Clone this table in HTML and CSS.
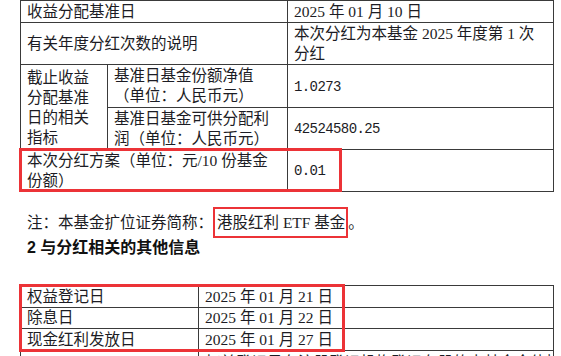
FILE: index.html
```html
<!DOCTYPE html>
<html lang="zh-CN">
<head>
<meta charset="utf-8">
<link rel="stylesheet" href="styles.css">
</head>
<body>
<div class="page">
  <div class="tbl-wrap">
    <table class="tbl t1">
      <colgroup><col class="c-a"><col class="c-b"><col class="c-c"></colgroup>
      <tr class="r1"><td colspan="2">收益分配基准日</td><td>2025 年 01 月 10 日</td></tr>
      <tr class="r2"><td colspan="2">有关年度分红次数的说明</td><td>本次分红为本基金 2025 年度第 1 次<br>分红</td></tr>
      <tr class="r3"><td rowspan="2" class="tall">截止收益<br>分配基准<br>日的相关<br>指标</td><td>基准日基金份额净值<br>（单位：人民币元）</td><td><span class="num">1.0273</span></td></tr>
      <tr class="r4"><td>基准日基金可供分配利<br>润（单位：人民币元）</td><td><span class="num">42524580.25</span></td></tr>
      <tr class="r5"><td colspan="2">本次分红方案（单位：元/10 份基金<br>份额）</td><td><span class="num">0.01</span></td></tr>
    </table>
    <div class="mark mark-1"></div>
  </div>
  <p class="note">注：本基金扩位证券简称：<span class="hl">港股红利 ETF 基金</span>。</p>
  <h2 class="sec">2 与分红相关的其他信息</h2>
  <div class="tbl-wrap">
    <table class="tbl t2">
      <colgroup><col class="c-l"><col class="c-r"></colgroup>
      <tr class="s1"><td>权益登记日</td><td>2025 年 01 月 21 日</td></tr>
      <tr class="s2"><td>除息日</td><td>2025 年 01 月 22 日</td></tr>
      <tr class="s3"><td>现金红利发放日</td><td>2025 年 01 月 27 日</td></tr>
      <tr class="s4"><td class="mid">分红对象</td><td class="top">权益登记日在注册登记机构登记在册的本基金全体持有人</td></tr>
    </table>
    <div class="mark mark-2"></div>
  </div>
</div>
</body>
</html>
```

FILE: styles.css
```css
html, body {
  margin: 0;
  padding: 0;
  background: #ffffff;
  overflow: hidden;
}
body {
  width: 561px;
  height: 356px;
  font-family: "Liberation Serif", "Noto Sans CJK SC", serif;
  font-size: 15.5px;
  color: #1c1c24;
}
.page {
  padding-left: 20px;
}
.tbl-wrap {
  position: relative;
  width: 533px;
}
.tbl {
  border-collapse: collapse;
  table-layout: fixed;
  width: 533px;
}
.tbl td {
  border: 1px solid #3a3a3a;
  padding: 0 6px;
  line-height: 20px;
  vertical-align: middle;
  white-space: nowrap;
  overflow: hidden;
}
.t1 .c-a { width: 87px; }
.t1 .c-b { width: 180px; }
.t1 .c-c { width: 266px; }
.t1 tr { border-top: 1px solid #555; }
.r1 { height: 22px; }
.r2 { height: 42px; }
.r3 { height: 43px; }
.r4 { height: 42px; }
.r5 { height: 42px; }
.t1 td.tall { vertical-align: top; padding-top: 3px; }
.num {
  font-family: "Liberation Mono", monospace;
  font-size: 14px;
  letter-spacing: -0.6px;
}
.t2 .c-l { width: 178px; }
.t2 .c-r { width: 355px; }
.s1, .s3 { height: 22px; }
.s2 { height: 21px; }
.s4 { height: 60px; }
.t2 .s4 td.mid { vertical-align: middle; }
.t2 .s4 td.top { vertical-align: top; padding-top: 2px; }
.mark {
  position: absolute;
  box-sizing: border-box;
  border: 3px solid #ec3337;
  pointer-events: none;
}
.mark-1 {
  left: -1px;
  top: 148px;
  width: 323px;
  height: 44px;
}
.mark-2 {
  left: -1px;
  top: -1px;
  width: 326px;
  height: 68px;
}
.note {
  margin: 15px 0 0 7px;
  line-height: 31px;
  height: 31px;
}
.hl {
  display: inline-block;
  box-sizing: border-box;
  height: 31px;
  line-height: 27px;
  border: 2px solid #ec3337;
  padding: 0 1px 0 2px;
  vertical-align: top;
}
.sec {
  margin: 0 0 27px 7px;
  font-family: "Liberation Sans", "Noto Sans CJK SC", sans-serif;
  font-weight: bold;
  font-size: 16px;
  line-height: 20px;
  color: #111;
}
```
